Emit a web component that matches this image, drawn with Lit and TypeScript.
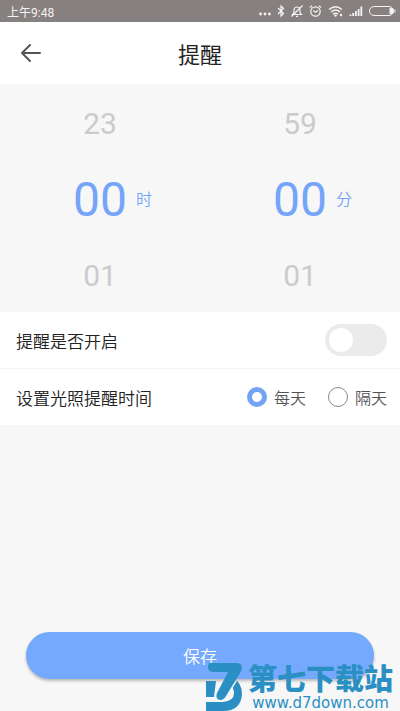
import { LitElement, html, css } from "lit";
import { customElement, property, state } from "lit/decorators.js";

const pad = (n: number) => String(n).padStart(2, "0");

@customElement("status-bar")
class StatusBar extends LitElement {
  static styles = css`
    :host {
      display: flex;
      align-items: center;
      justify-content: space-between;
      height: 22px;
      padding: 0 4px 0 7px;
      background: #878081;
      color: #f4f2f2;
      font-size: 12px;
    }
    .icons {
      display: flex;
      align-items: center;
      gap: 6px;
    }
    svg {
      display: block;
      fill: none;
      stroke: currentColor;
    }
    .solid {
      fill: currentColor;
      stroke: none;
    }
  `;

  render() {
    return html`
      <span>上午9:48</span>
      <div class="icons" aria-hidden="true">
        <svg class="solid" width="12" height="14" viewBox="0 0 12 14">
          <circle cx="1.600" cy="10" r="1.400" /><circle cx="6" cy="10" r="1.400" /><circle cx="10.400" cy="10" r="1.400" />
        </svg>
        <svg width="8" height="14" viewBox="0 0 8 14">
          <path d="M1 4 6.500 9.500 4 12V2L6.500 4.500 1 10" stroke-width="1.200" />
        </svg>
        <svg width="12" height="14" viewBox="0 0 12 14">
          <path d="M1.500 10.500h9L9 8.500V6a3 3 0 0 0-6 0v2.500zM5 12.300h2" stroke-width="1.200" />
          <path d="M11.500 1.500.500 12.500" stroke-width="1.200" />
        </svg>
        <svg width="13" height="14" viewBox="0 0 13 14">
          <circle cx="6.500" cy="7.500" r="4.700" stroke-width="1.200" />
          <path d="M4.300 6.500 6.500 8.300 9 6.500M1 3.500 3 1.700M12 3.500 10 1.700" stroke-width="1.200" />
        </svg>
        <svg width="15" height="14" viewBox="0 0 15 14">
          <path d="M1 5.500Q7.500 0 14 5.500M3 8Q7.500 4 12 8M5 10.300Q7.500 8 10 10.300" stroke-width="1.400" />
          <circle class="solid" cx="7.500" cy="11.600" r="1.200" /><circle class="solid" cx="13" cy="11" r="1.200" />
        </svg>
        <svg width="14" height="14" viewBox="0 0 14 14">
          <path d="M1.500 12v-1.500M4.200 12V9M6.900 12V7M9.600 12V5M12.300 12V2.500" stroke-width="1.800" />
        </svg>
        <svg width="27" height="12" viewBox="0 0 27 12">
          <rect x="0.500" y="1.500" width="24" height="9" rx="4.500" />
          <path class="solid" d="M20.500 3h1.500a3 3 0 0 1 0 6h-1.500z" /><path d="M26 4.500v3" />
        </svg>
      </div>
    `;
  }
}

@customElement("time-wheel")
class TimeWheel extends LitElement {
  @property({ type: Number }) size = 24;
  @property() unit = "";
  @state() private value = 0;

  static styles = css`
    :host {
      display: grid;
      grid-template-rows: repeat(3, 76px);
      flex: 1;
    }
    button {
      border: 0;
      padding: 2px 0 0;
      background: none;
      color: #cbcbcb;
      font: 400 30px Roboto, sans-serif;
    }
    .current {
      display: grid;
      grid-template-columns: 1fr auto 1fr;
      column-gap: 9px;
      align-items: center;
      padding-top: 4px;
      color: #74a5f8;
    }
    .value {
      grid-column: 2;
      font-size: 48px;
      line-height: 56px;
    }
    .unit {
      font-size: 16px;
      font-weight: 350;
      line-height: 24px;
    }
  `;

  private at(step: number) {
    return (this.value + step + this.size) % this.size;
  }

  private move(step: number) {
    this.value = this.at(step);
  }

  render() {
    return html`
      <button type="button" @click=${() => this.move(-1)}>${pad(this.at(-1))}</button>
      <div class="current">
        <span class="value">${pad(this.value)}</span>
        <span class="unit">${this.unit}</span>
      </div>
      <button type="button" @click=${() => this.move(1)}>${pad(this.at(1))}</button>
    `;
  }
}

@customElement("site-mark")
class SiteMark extends LitElement {
  static styles = css`
    :host {
      position: absolute;
      right: 7px;
      bottom: 0;
      display: flex;
      align-items: flex-end;
      gap: 6px;
      color: #2a90c3;
      pointer-events: none;
    }
    svg {
      display: block;
      fill: currentColor;
    }
    .words {
      display: flex;
      flex-direction: column;
      align-items: center;
    }
    .name {
      font-size: 29px;
      font-weight: 900;
      line-height: 30px;
    }
    .address {
      font: 15px/16px "DejaVu Sans", sans-serif;
    }
  `;

  render() {
    return html`
      <svg width="36" height="48" viewBox="0 0 36 48" aria-hidden="true">
        <defs>
          <path id="seven" d="M4 0H30Q38 0 35 8Q34 11 31 15L20 33Q18 37 14 37Q9 36 11 30L22 9H8Q2 9 2 4V2Q2 0 4 0z" />
          <mask id="gap" maskUnits="userSpaceOnUse" x="0" y="0" width="36" height="48">
            <rect width="36" height="48" fill="#fff" />
            <use href="#seven" fill="#000" stroke="#000" stroke-width="3" />
          </mask>
        </defs>
        <g mask="url(#gap)">
          <path d="M0 18H10L8 34H0z" />
          <path fill-rule="evenodd" d="M0 39H17Q28 38 28 30Q28 25 24 22V17L27 14Q36 20 36 31Q35 48 17 48H0z" />
        </g>
        <use href="#seven" />
      </svg>
      <div class="words">
        <span class="name">第七下载站</span>
        <span class="address">www.d7down.com</span>
      </div>
    `;
  }
}

@customElement("app-root")
class AppRoot extends LitElement {
  @state() private enabled = false;

  static styles = css`
    :host {
      position: relative;
      display: flex;
      flex-direction: column;
      min-height: 100vh;
      background: #f7f7f7;
      color: #222;
      font-family: Roboto, "Noto Sans CJK SC", sans-serif;
    }
    header {
      display: grid;
      grid-template-columns: 62px 1fr 62px;
      align-items: center;
      height: 62px;
      background: #fff;
    }
    h1 {
      margin: 0;
      font-size: 22px;
      font-weight: 400;
      text-align: center;
    }
    .back {
      display: grid;
      place-items: center;
      height: 62px;
      padding: 0;
      border: 0;
      background: none;
      color: #555;
    }
    .back svg {
      fill: none;
      stroke: currentColor;
      stroke-width: 2;
      stroke-linecap: round;
      stroke-linejoin: round;
    }
    .wheels {
      display: flex;
    }
    .row {
      display: flex;
      align-items: center;
      justify-content: space-between;
      box-sizing: border-box;
      height: 56px;
      padding: 0 13px 0 16px;
      background: #fff;
      font-size: 17px;
      font-weight: 350;
    }
    .row + .row {
      height: 57px;
      border-top: 1px solid #f3f3f3;
    }
    input {
      appearance: none;
      box-sizing: border-box;
      margin: 0;
    }
    .switch {
      width: 62px;
      height: 32px;
      padding: 4px;
      border-radius: 16px;
      background: #ebebeb;
    }
    .switch::before {
      content: "";
      display: block;
      width: 24px;
      height: 24px;
      border-radius: 50%;
      background: #fff;
    }
    .switch:checked {
      background: #74a9fd;
    }
    .switch:checked::before {
      margin-left: auto;
    }
    .options {
      display: flex;
      gap: 22px;
    }
    .option {
      display: flex;
      align-items: center;
      gap: 7px;
      color: #555;
      font-size: 16px;
    }
    .option input {
      width: 20px;
      height: 20px;
      border: 1px solid #888;
      border-radius: 50%;
      background: #fff;
    }
    .option input:checked {
      border: 5px solid #74a3f5;
    }
    .save {
      height: 47px;
      margin: auto 26px 32px;
      border: 0;
      border-radius: 24px;
      background: #74a9fd;
      box-shadow: 0 2px 3px rgba(0, 0, 0, 0.25);
      color: #fff;
      font: inherit;
      font-size: 17px;
      font-weight: 350;
    }
  `;

  render() {
    return html`
      <status-bar></status-bar>
      <header>
        <button class="back" type="button" aria-label="返回">
          <svg width="22" height="20" viewBox="0 0 22 20"><path d="M10 2 2 10l8 8M2 10h18" /></svg>
        </button>
        <h1>提醒</h1>
      </header>
      <div class="wheels">
        <time-wheel size="24" unit="时"></time-wheel>
        <time-wheel size="60" unit="分"></time-wheel>
      </div>
      <div class="row">
        <label for="enabled">提醒是否开启</label>
        <input
          id="enabled"
          class="switch"
          type="checkbox"
          role="switch"
          .checked=${this.enabled}
          @change=${(e: Event) => (this.enabled = (e.target as HTMLInputElement).checked)}
        />
      </div>
      <div class="row" role="radiogroup" aria-labelledby="repeat">
        <span id="repeat">设置光照提醒时间</span>
        <div class="options">
          <label class="option"><input type="radio" name="repeat" value="daily" checked />每天</label>
          <label class="option"><input type="radio" name="repeat" value="alternate" />隔天</label>
        </div>
      </div>
      <button class="save" type="button">保存</button>
      <site-mark></site-mark>
    `;
  }
}
